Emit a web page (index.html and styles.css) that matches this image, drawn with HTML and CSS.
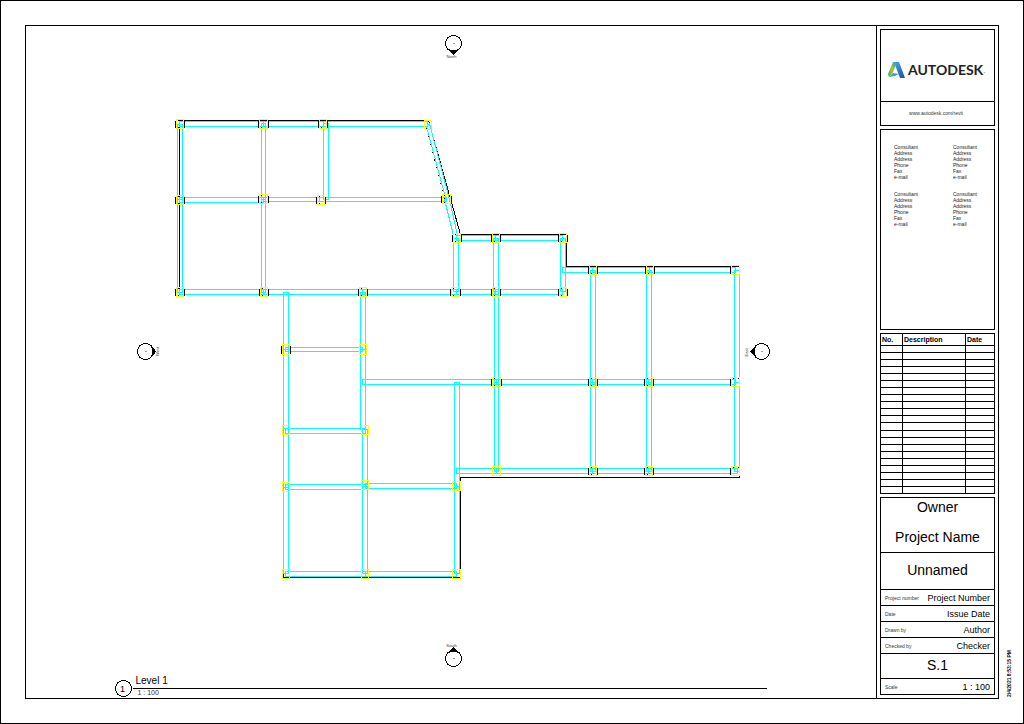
FILE: index.html
```html
<!DOCTYPE html>
<html lang="en">
<head>
<meta charset="utf-8">
<title>S.1 - Unnamed</title>
<link rel="stylesheet" href="styles.css">
</head>
<body>
<div class="sheet">
<main class="frame">
<svg class="plan" viewBox="25.5 25.5 850 672" role="img" aria-label="Level 1 structural plan">
  <defs>
    <g id="c7">
      <path class="steel" d="M-1 1V8M8 1V8M1 1h1M6 1h1M1 8h1M6 8h1"/>
      <rect class="col" width="7" height="9"/>
    </g>
    <g id="c8">
      <path class="steel" d="M-1 1V8M9 1V8M1 1h1M7 1h1M1 8h1M7 8h1"/>
      <rect class="col" width="8" height="9"/>
    </g>
    <g id="cl">
      <path class="steel" d="M-1 1V8M1 1h1M6 1h2"/>
      <rect class="col" width="8" height="9"/>
    </g>
  </defs>

  <!-- slab edge -->
  <g class="edge">
    <path d="M179 292V120H428"/>
    <path d="M428 120L460 234"/>
    <path d="M426 128L453 234" stroke-dasharray="1 7"/>
    <path d="M460 234H566V266H739"/>
    <path d="M739 475V477H460V577H283V573"/>
  </g>

  <!-- beams -->
  <g class="beam">
    <rect x="179" y="121" width="84" height="5"/>
    <rect x="263" y="121" width="60" height="5"/>
    <rect x="323" y="121" width="104" height="5"/>
    <rect x="177" y="124" width="5" height="75"/>
    <rect x="177" y="199" width="5" height="93"/>
    <rect x="261" y="123" width="4" height="76"/>
    <rect x="261" y="199" width="4" height="93"/>
    <rect x="323" y="123" width="5" height="76"/>
    <rect x="179" y="197" width="84" height="5"/>
    <rect x="263" y="197" width="56" height="4"/>
    <rect x="319" y="197" width="127" height="4"/>
    <path d="M426 126L446 201M429 123L449 199M426 126L429 123"/>
    <path d="M444 199L453 235M449 199L457 235"/>
    <rect x="179" y="289" width="84" height="5"/>
    <rect x="263" y="289" width="99" height="5"/>
    <rect x="362" y="289" width="94" height="5"/>
    <rect x="456" y="289" width="39" height="5"/>
    <rect x="495" y="289" width="67" height="5"/>
    <rect x="453" y="238" width="5" height="53"/>
    <rect x="456" y="235" width="39" height="5"/>
    <rect x="495" y="235" width="67" height="5"/>
    <rect x="493" y="238" width="5" height="53"/>
    <rect x="560" y="238" width="5" height="53"/>
    <rect x="494" y="291" width="4" height="91"/>
    <rect x="494" y="382" width="4" height="89"/>
    <rect x="562" y="267" width="30" height="5"/>
    <rect x="592" y="267" width="57" height="5"/>
    <rect x="649" y="267" width="86" height="5"/>
    <rect x="590" y="270" width="5" height="112"/>
    <rect x="590" y="382" width="5" height="89"/>
    <rect x="646" y="270" width="5" height="112"/>
    <rect x="646" y="382" width="5" height="89"/>
    <path d="M739 270H734V471H739ZM734 382H739"/>
    <rect x="362" y="379" width="134" height="5"/>
    <rect x="496" y="379" width="96" height="5"/>
    <rect x="592" y="379" width="56" height="5"/>
    <rect x="648" y="379" width="87" height="5"/>
    <rect x="456" y="468" width="40" height="5"/>
    <rect x="496" y="468" width="96" height="5"/>
    <rect x="592" y="468" width="56" height="5"/>
    <rect x="648" y="468" width="89" height="5"/>
    <rect x="283" y="292" width="5" height="57"/>
    <rect x="283" y="349" width="5" height="79"/>
    <rect x="283" y="428" width="5" height="59"/>
    <rect x="283" y="487" width="5" height="86"/>
    <rect x="360" y="292" width="5" height="57"/>
    <path d="M360 349V429M365 349V428H360"/>
    <rect x="362" y="429" width="5" height="55"/>
    <rect x="362" y="486" width="5" height="87"/>
    <rect x="454" y="382" width="5" height="104"/>
    <rect x="454" y="486" width="5" height="87"/>
    <rect x="285" y="347" width="77" height="4"/>
    <rect x="285" y="428" width="80" height="5"/>
    <rect x="285" y="484" width="80" height="5"/>
    <rect x="365" y="483" width="91" height="5"/>
    <rect x="285" y="571" width="80" height="5"/>
    <rect x="365" y="571" width="91" height="5"/>
  </g>

  <!-- columns -->
  <g>
    <use href="#c7" x="176" y="119"/>
    <use href="#c8" x="259" y="119"/>
    <use href="#c7" x="319" y="119"/>
    <rect class="col" x="424" y="120" width="7" height="9"/>
    <use href="#c7" x="176" y="195"/>
    <use href="#c8" x="259" y="194"/>
    <use href="#c7" x="317" y="195"/>
    <use href="#c8" x="442" y="194"/>
    <use href="#c7" x="176" y="287"/>
    <use href="#c7" x="260" y="287"/>
    <use href="#c7" x="359" y="287"/>
    <use href="#c8" x="451" y="287"/>
    <use href="#c7" x="492" y="287"/>
    <use href="#c7" x="559" y="287"/>
    <use href="#c7" x="453" y="233"/>
    <use href="#c7" x="492" y="233"/>
    <use href="#c7" x="559" y="233"/>
    <use href="#c7" x="589" y="265"/>
    <use href="#c7" x="646" y="265"/>
    <use href="#cl" x="731" y="265"/>
    <use href="#c8" x="492" y="377"/>
    <use href="#c7" x="589" y="377"/>
    <use href="#c7" x="645" y="377"/>
    <use href="#cl" x="731" y="377"/>
    <rect class="col" x="492" y="466" width="8" height="9"/>
    <use href="#c7" x="589" y="466"/>
    <use href="#c7" x="645" y="466"/>
    <use href="#cl" x="731" y="466"/>
    <path class="steel" d="M281 345V353M290 345V353"/>
    <rect class="col" x="282" y="344" width="7" height="10"/>
    <rect class="col" x="359" y="344" width="7" height="10"/>
    <rect class="col" x="282" y="425" width="7" height="9"/>
    <rect class="col" x="361" y="425" width="7" height="9"/>
    <rect class="col" x="282" y="482" width="7" height="9"/>
    <rect class="col" x="361" y="480" width="7" height="9"/>
    <rect class="col" x="452" y="481" width="8" height="9"/>
    <rect class="col" x="282" y="569" width="7" height="9"/>
    <rect class="col" x="361" y="569" width="7" height="9"/>
    <rect class="col" x="452" y="569" width="8" height="9"/>
  </g>

  <!-- elevation marks -->
  <g class="mark">
    <circle cx="453" cy="43" r="8"/>
    <path d="M448 49Q453 52 458 49L453 54Z"/>
    <circle cx="453" cy="658" r="8"/>
    <path d="M448 652Q453 649 458 652L453 647Z"/>
    <circle cx="145" cy="351" r="8"/>
    <path d="M151 346Q154 351 151 356L155 351Z"/>
    <circle cx="761" cy="351" r="8"/>
    <path d="M755 346Q752 351 755 356L750 351Z"/>
  </g>
  <path class="dash" d="M452 43h2M452 658h2M144 351h2M760 351h2"/>
  <text class="tiny" x="451" y="57">North</text>
  <text class="tiny" x="451" y="646">South</text>
  <text class="tiny" transform="translate(158 351) rotate(-90)">West</text>
  <text class="tiny" transform="translate(747 352) rotate(-90)">East</text>

  <!-- view title -->
  <g class="title-mark">
    <circle cx="123" cy="688" r="8"/>
    <path d="M132 688H766"/>
  </g>
  <text class="view-no" x="122" y="691">1</text>
  <text class="view-name" x="135" y="683">Level 1</text>
  <text class="view-scale" x="137" y="694">1 : 100</text>
</svg>

<aside class="titleblock">
  <section class="box brand">
    <div class="logo">
      <svg class="logo-mark" viewBox="0 0 17 16" aria-hidden="true">
        <defs>
          <linearGradient id="g1" x1="0" y1="1" x2="1" y2="0"><stop offset="0" stop-color="#4d9a55"/><stop offset=".5" stop-color="#a0c54a"/><stop offset="1" stop-color="#2f8fa8"/></linearGradient>
          <linearGradient id="g2" x1="0" y1="0" x2="1" y2="1"><stop offset="0" stop-color="#43b3e8"/><stop offset="1" stop-color="#24489c"/></linearGradient>
        </defs>
        <path fill="url(#g1)" d="M5 0H9L5 10L1 15L0 12Z"/>
        <path fill="#3fa79b" d="M1 15L5 11L11 12L7 14Z"/>
        <path fill="url(#g2)" d="M5 0H11L17 16H12L7 3Z"/>
      </svg>
      <span class="logo-name">AUTODESK</span><span class="logo-dot">.</span>
    </div>
    <a class="site" href="http://www.autodesk.com/revit">www.autodesk.com/revit</a>
  </section>

  <section class="box consultants">
    <address>Consultant<br>Address<br>Address<br>Phone<br>Fax<br>e-mail</address>
    <address>Consultant<br>Address<br>Address<br>Phone<br>Fax<br>e-mail</address>
    <address>Consultant<br>Address<br>Address<br>Phone<br>Fax<br>e-mail</address>
    <address>Consultant<br>Address<br>Address<br>Phone<br>Fax<br>e-mail</address>
  </section>

  <table class="revisions">
    <thead><tr><th class="c-no">No.</th><th>Description</th><th class="c-date">Date</th></tr></thead>
    <tbody>
      <tr><td></td><td></td><td></td></tr>
      <tr><td></td><td></td><td></td></tr>
      <tr><td></td><td></td><td></td></tr>
      <tr><td></td><td></td><td></td></tr>
      <tr><td></td><td></td><td></td></tr>
      <tr><td></td><td></td><td></td></tr>
      <tr><td></td><td></td><td></td></tr>
      <tr><td></td><td></td><td></td></tr>
      <tr><td></td><td></td><td></td></tr>
      <tr><td></td><td></td><td></td></tr>
      <tr><td></td><td></td><td></td></tr>
      <tr class="tall"><td></td><td></td><td></td></tr>
      <tr><td></td><td></td><td></td></tr>
      <tr><td></td><td></td><td></td></tr>
      <tr><td></td><td></td><td></td></tr>
      <tr><td></td><td></td><td></td></tr>
      <tr><td></td><td></td><td></td></tr>
      <tr><td></td><td></td><td></td></tr>
      <tr><td></td><td></td><td></td></tr>
      <tr><td></td><td></td><td></td></tr>
      <tr><td></td><td></td><td></td></tr>
    </tbody>
  </table>

  <section class="box project">
    <div class="names"><p>Owner</p><p>Project Name</p></div>
    <h1 class="sheet-name">Unnamed</h1>
    <dl class="facts">
      <div><dt>Project number</dt><dd>Project Number</dd></div>
      <div><dt>Date</dt><dd>Issue Date</dd></div>
      <div><dt>Drawn by</dt><dd>Author</dd></div>
      <div><dt>Checked by</dt><dd>Checker</dd></div>
    </dl>
    <p class="sheet-no">S.1</p>
    <dl class="facts scale">
      <div><dt>Scale</dt><dd>1 : 100</dd></div>
    </dl>
  </section>
</aside>
</main>
<time class="stamp">2/4/2021 8:53:15 PM</time>
</div>
</body>
</html>
```

FILE: styles.css
```css
* { box-sizing: border-box; margin: 0; padding: 0; }

body {
  background: #fff;
  color: #000;
  font-family: "Liberation Sans", Arial, sans-serif;
}

.sheet {
  display: flex;
  min-height: 100vh;
  padding: 24px 0 24px 24px;
  border: 1px solid #000;
}

.frame {
  display: flex;
  flex: 1;
  min-width: 0;
  border: 1px solid #000;
}

.stamp {
  width: 24px;
  padding: 2px 7px 0 0;
  font-size: 5px;
  font-weight: bold;
  line-height: 7px;
  text-align: left;
  white-space: nowrap;
  writing-mode: vertical-rl;
  transform: rotate(180deg);
}

/* plan */
.plan { display: block; flex: 1; min-width: 0; align-self: flex-start; }
.plan rect, .plan path, .plan circle { fill: none; stroke-width: 1; shape-rendering: crispEdges; }
.edge, .steel { stroke: #000; }
.beam { stroke: #0ff; }
.plan .col { stroke: #ff0; }
.mark, .title-mark { stroke: #000; }
.plan .mark path { fill: #000; }
.dash { stroke: #999; }
.tiny { font-size: 4px; fill: #333; text-anchor: middle; }
.view-no { font-size: 9px; text-anchor: middle; }
.view-name { font-size: 10px; }
.view-scale { font-size: 7px; fill: #333; }

/* title block */
.titleblock {
  display: flex;
  flex-direction: column;
  gap: 3px;
  flex: 0 0 122px;
  padding: 3px;
  border-left: 1px solid #000;
}
.box { border: 1px solid #000; }

.logo {
  display: flex;
  align-items: center;
  height: 72px;
  padding: 8px 0 0 7px;
  border-bottom: 1px solid #000;
}
.logo-mark { width: 17px; height: 16px; margin-right: 3px; }
.logo-name { font-family: Lato, sans-serif; font-size: 14px; font-weight: bold; line-height: 16px; color: #222; }
.logo-dot { font-size: 9px; color: #999; }
.site {
  display: block;
  padding-right: 3px;
  font-size: 5px;
  line-height: 23px;
  text-align: center;
  color: #333;
  text-decoration: none;
}

.consultants {
  display: grid;
  grid-template-columns: 1fr 1fr;
  align-content: start;
  gap: 11px 4px;
  flex: 1;
  padding: 14px 0 0 13px;
}
.consultants address { font-size: 5px; font-style: normal; line-height: 6px; color: #222; }
.consultants address:nth-child(even) { padding-left: 7px; }

.revisions {
  width: 100%;
  table-layout: fixed;
  border: solid #000;
  border-width: 1px 0 0 1px;
  border-collapse: separate;
  border-spacing: 0;
}
.revisions th, .revisions td {
  height: 7px;
  border: solid #000;
  border-width: 0 1px 1px 0;
}
.revisions th { height: 12px; padding-left: 1px; font-size: 7px; line-height: 11px; text-align: left; }
.revisions .tall td { height: 8px; }
.c-no { width: 22px; }
.c-date { width: 29px; }

.project { text-align: center; font-size: 14px; line-height: 16px; }
.names { display: grid; gap: 14px; padding: 1px 0 7px; border-bottom: 1px solid #000; }
.sheet-name { padding-bottom: 2px; font-size: 14px; font-weight: normal; line-height: 34px; border-bottom: 1px solid #000; }
.facts div {
  display: flex;
  align-items: center;
  justify-content: space-between;
  height: 16px;
  padding: 0 4px;
  border-bottom: 1px solid #000;
}
.facts dt { font-size: 5px; color: #333; }
.facts dd { font-size: 9px; }
.facts.scale div { height: 15px; border-bottom: 0; }
.sheet-no { padding-bottom: 1px; line-height: 23px; border-bottom: 1px solid #000; }
```
